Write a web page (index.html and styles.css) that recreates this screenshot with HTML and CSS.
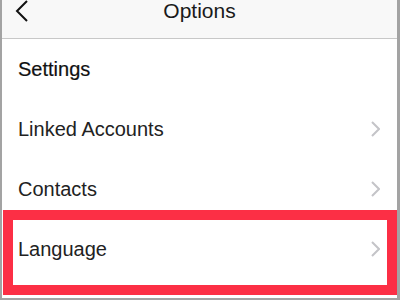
FILE: index.html
```html
<!DOCTYPE html>
<html lang="en">
<head>
    <meta charset="UTF-8">
    <title>Options</title>
    <link rel="stylesheet" href="styles.css">
</head>
<body>
    <div class="screen">
        <div class="nav-bar">
            <svg class="back-icon" viewBox="0 0 14 22">
                <path d="M12 1L2 11l10 10"></path>
            </svg>
            <span class="nav-title">Options</span>
        </div>

        <div class="section-title">Settings</div>

        <div class="option-row">
            <span>Linked Accounts</span>
            <svg class="chevron" viewBox="0 0 10 16">
                <path d="M2 1l7 7-7 7"></path>
            </svg>
        </div>
        <div class="option-row">
            <span>Contacts</span>
            <svg class="chevron" viewBox="0 0 10 16">
                <path d="M2 1l7 7-7 7"></path>
            </svg>
        </div>
        <div class="option-row">
            <span>Language</span>
            <svg class="chevron" viewBox="0 0 10 16">
                <path d="M2 1l7 7-7 7"></path>
            </svg>
            <span class="highlight"></span>
        </div>
    </div>
</body>
</html>
```

FILE: styles.css
```css
* {
    margin: 0;
    padding: 0;
    box-sizing: border-box;
}

body {
    font-family: "Liberation Sans", Arial, sans-serif;
    background: #a3a3a3;
    width: 400px;
    height: 300px;
    overflow: hidden;
}

.screen {
    height: 300px;
    background: #fff;
    border-left: 2px solid #a3a3a3;
    border-right: 3px solid #a3a3a3;
    border-bottom: 2px solid #a3a3a3;
    color: #222;
}

.nav-bar {
    position: relative;
    height: 39px;
    background: #f8f8f8;
    border-bottom: 1px solid #c8c8c8;
    text-align: center;
}

.nav-title {
    font-size: 21px;
    line-height: 22px;
    color: #1a1a1a;
}

.back-icon {
    position: absolute;
    left: 13px;
    top: 0;
    width: 14px;
    height: 22px;
    stroke: #111;
    stroke-width: 2;
    fill: none;
}

.section-title,
.option-row {
    height: 60px;
    line-height: 60px;
    padding-left: 16px;
    font-size: 20px;
}

.section-title {
    color: #111;
    -webkit-text-stroke: 0.2px #111;
}

.option-row {
    position: relative;
    display: flex;
    align-items: center;
    justify-content: space-between;
    padding-right: 17px;
}

.chevron {
    width: 10px;
    height: 16px;
    stroke: #c4c4c8;
    stroke-width: 2;
    fill: none;
}

.highlight {
    position: absolute;
    top: -9px;
    left: 1px;
    right: 0;
    bottom: -16px;
    border: 10px solid #fc2f45;
}
```
